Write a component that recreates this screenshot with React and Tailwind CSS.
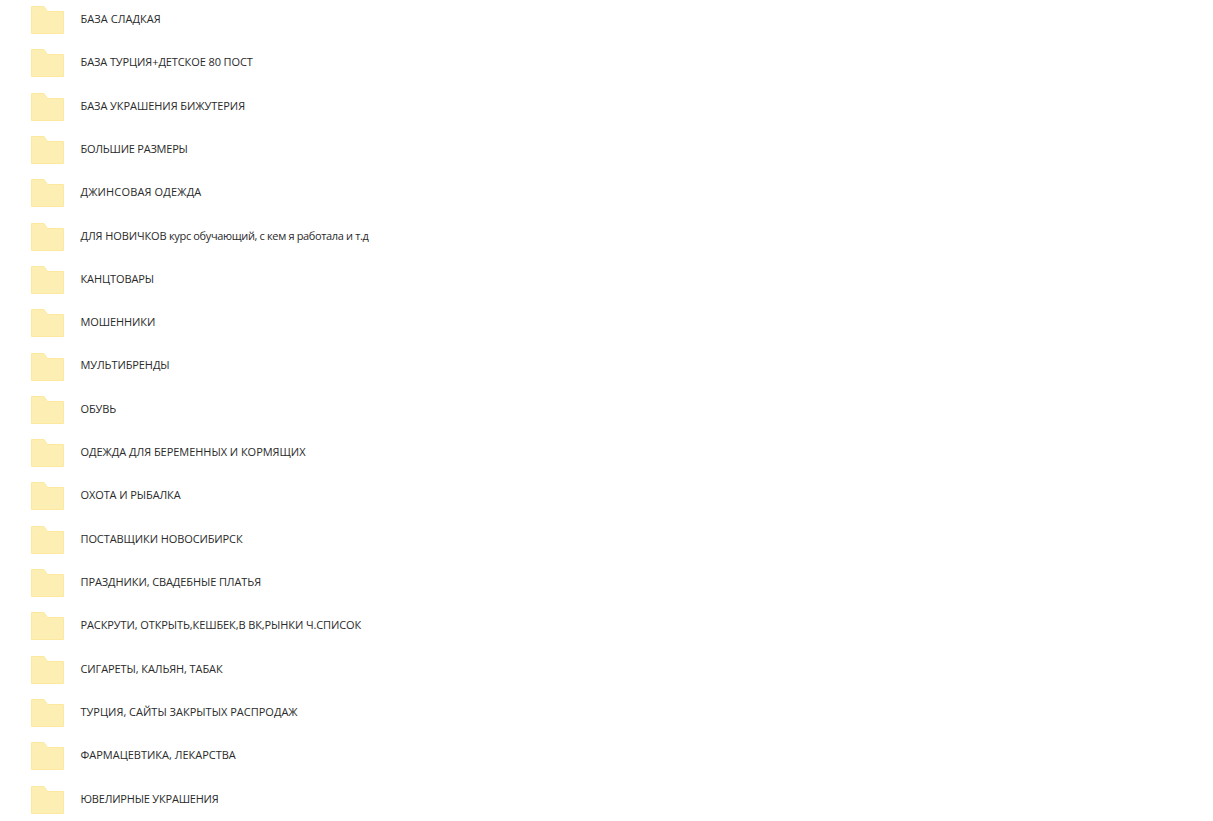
const rows = [
  { t: "БАЗА СЛАДКАЯ", c: "tracking-[0.05px]" },
  { t: "БАЗА ТУРЦИЯ+ДЕТСКОЕ 80 ПОСТ", c: "tracking-[-0.1px]" },
  { t: "БАЗА УКРАШЕНИЯ БИЖУТЕРИЯ", c: "tracking-[-0.06px]" },
  { t: "БОЛЬШИЕ РАЗМЕРЫ", c: "tracking-[-0.23px]" },
  { t: "ДЖИНСОВАЯ ОДЕЖДА", c: "tracking-[0.15px]" },
  { t: "ДЛЯ НОВИЧКОВ", l: " курс обучающий, с кем я работала и т.д", c: "tracking-[-0.1px]" },
  { t: "КАНЦТОВАРЫ", c: "tracking-[-0.1px]" },
  { t: "МОШЕННИКИ", c: "tracking-[-0.1px]" },
  { t: "МУЛЬТИБРЕНДЫ", c: "tracking-[-0.1px]" },
  { t: "ОБУВЬ", c: "tracking-[-0.1px]" },
  { t: "ОДЕЖДА ДЛЯ БЕРЕМЕННЫХ И КОРМЯЩИХ", c: "tracking-[-0.04px]" },
  { t: "ОХОТА И РЫБАЛКА", c: "tracking-[-0.1px]" },
  { t: "ПОСТАВЩИКИ НОВОСИБИРСК", c: "tracking-[-0.1px]" },
  { t: "ПРАЗДНИКИ, СВАДЕБНЫЕ ПЛАТЬЯ", c: "tracking-[-0.1px]" },
  { t: "РАСКРУТИ, ОТКРЫТЬ,КЕШБЕК,В ВК,РЫНКИ Ч.СПИСОК", c: "tracking-[-0.1px]" },
  { t: "СИГАРЕТЫ, КАЛЬЯН, ТАБАК", c: "tracking-[-0.1px]" },
  { t: "ТУРЦИЯ, САЙТЫ ЗАКРЫТЫХ РАСПРОДАЖ", c: "tracking-[0px]" },
  { t: "ФАРМАЦЕВТИКА, ЛЕКАРСТВА", c: "tracking-[-0.01px]" },
  { t: "ЮВЕЛИРНЫЕ УКРАШЕНИЯ", c: "tracking-[-0.2px]" },
];

function Folder() {
  return (
    <svg width="33" height="28" viewBox="0 0 33 28" className="mt-[6px] shrink-0">
      <path d="M0.5 0.5H13L16.5 5.5H32.5V27.5H0.5Z" fill="#fdefb4" stroke="#fbe9a0" />
    </svg>
  );
}

export default function App() {
  return (
    <div className="h-[821px] w-[1213px] overflow-hidden bg-white font-['Open_Sans','Noto_Sans',sans-serif]">
      <ul className="pl-[31px]">
        {rows.map(({ t, l, c }) => (
          <li key={t} className="flex h-[43.32px] items-start gap-[16.5px]">
            <Folder />
            <span className={`mt-[10.96px] whitespace-nowrap text-[11px] leading-4 text-[#2a2a2a] ${c}`}>
              {t}
              {l && <span className="tracking-[-0.35px]">{l}</span>}
            </span>
          </li>
        ))}
      </ul>
    </div>
  );
}
